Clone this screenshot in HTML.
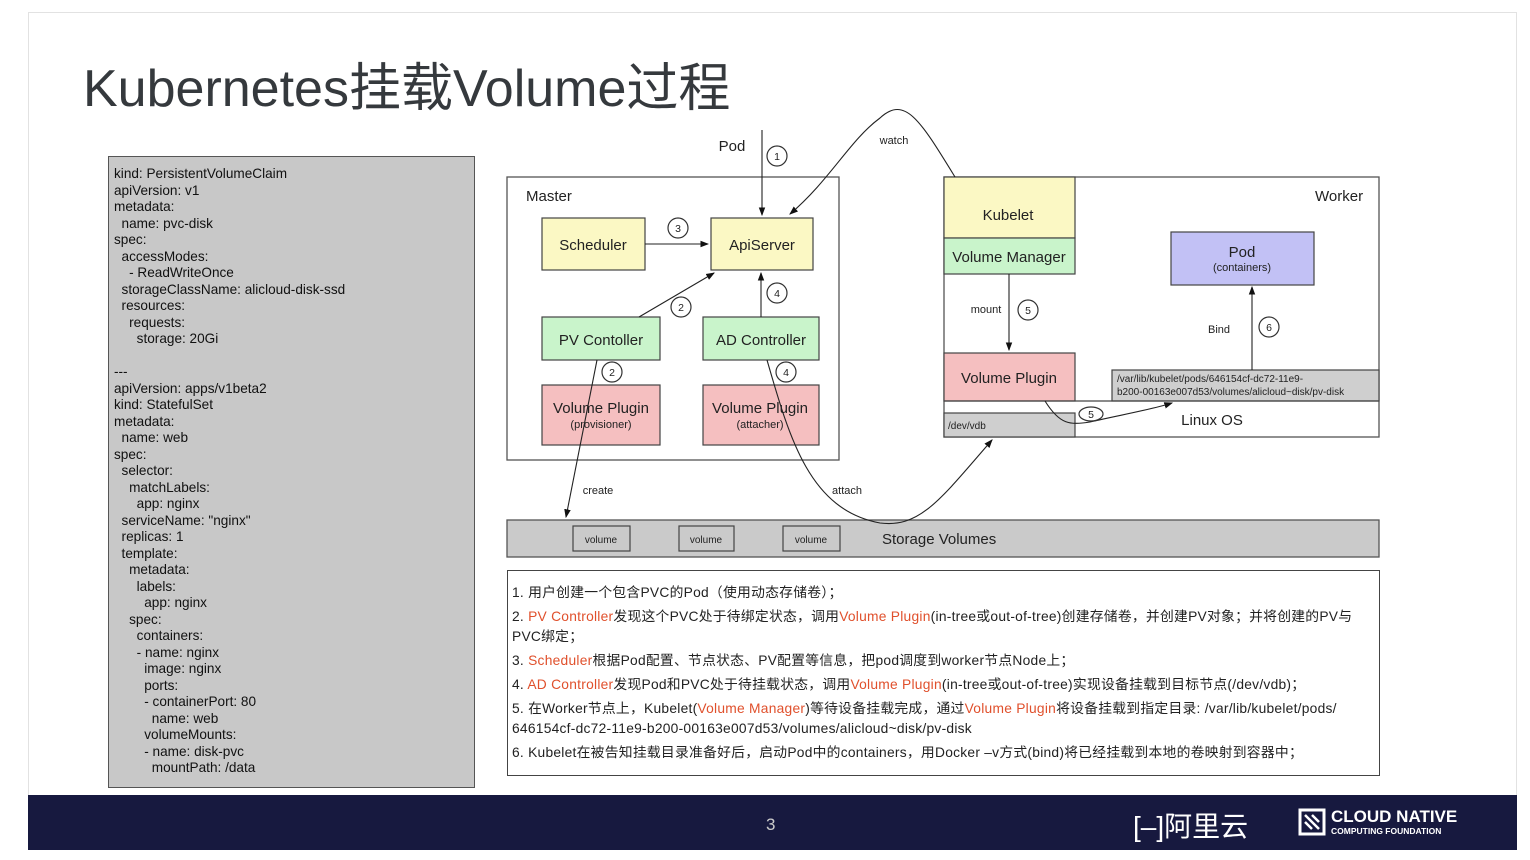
<!DOCTYPE html>
<html><head><meta charset="utf-8"><style>
body{margin:0;width:1530px;height:860px;background:#fff;position:relative;overflow:hidden;font-family:"Liberation Sans","Noto Sans CJK SC",sans-serif}
.slide{position:absolute;left:28px;top:12px;width:1489px;height:838px;border:1px solid #e2e2e2;border-bottom:none;box-sizing:border-box}
.title{position:absolute;left:83px;top:46px;font-size:52px;color:#35393d;white-space:nowrap;letter-spacing:0px}
.code{position:absolute;left:108px;top:156px;width:367px;height:632px;background:#c8c8c8;border:1.5px solid #555;box-sizing:border-box;padding:9px 0 0 5px;font-size:13.6px;line-height:16.5px;color:#111;white-space:pre}
.list{position:absolute;left:507px;top:570px;width:873px;height:206px;border:1.5px solid #444;box-sizing:border-box;padding:10px 0 0 4px;font-size:13.8px;color:#222;line-height:24px;letter-spacing:0.25px}
.list div{white-space:nowrap}
.list .l2{line-height:20px;margin:2px 0 2px}
.r{color:#e0502c}
.footer{position:absolute;left:28px;top:795px;width:1489px;height:55px;background:#17193f;color:#fff}
</style></head><body>
<div class="slide"></div>
<div class="title">Kubernetes挂载Volume过程</div>
<div class="code">kind: PersistentVolumeClaim
apiVersion: v1
metadata:
  name: pvc-disk
spec:
  accessModes:
    - ReadWriteOnce
  storageClassName: alicloud-disk-ssd
  resources:
    requests:
      storage: 20Gi

---
apiVersion: apps/v1beta2
kind: StatefulSet
metadata:
  name: web
spec:
  selector:
    matchLabels:
      app: nginx
  serviceName: "nginx"
  replicas: 1
  template:
    metadata:
      labels:
        app: nginx
    spec:
      containers:
      - name: nginx
        image: nginx
        ports:
        - containerPort: 80
          name: web
        volumeMounts:
        - name: disk-pvc
          mountPath: /data</div>
<svg style="position:absolute;left:0;top:0" width="1530" height="860" font-family="Liberation Sans, sans-serif">
<defs><marker id="a" markerWidth="8" markerHeight="8" refX="7" refY="4" orient="auto"><path d="M0,1 L8,4 L0,7z" fill="#111"/></marker></defs>
<g stroke="#555" stroke-width="1.3" fill="none">
<rect x="507" y="177" width="332" height="283" fill="#fff"/>
<rect x="944" y="177" width="435" height="260" fill="#fff"/>
<rect x="507" y="520" width="872" height="37" fill="#cacaca"/>
</g>
<g stroke="#444" stroke-width="1.2">
<rect x="542" y="218" width="103" height="52" fill="#fbf8c4"/>
<rect x="711" y="218" width="102" height="52" fill="#fbf8c4"/>
<rect x="542" y="317" width="118" height="43" fill="#c9f4cb"/>
<rect x="703" y="317" width="116" height="43" fill="#c9f4cb"/>
<rect x="542" y="385" width="118" height="60" fill="#f5bfc0"/>
<rect x="703" y="385" width="116" height="60" fill="#f5bfc0"/>
<rect x="944" y="177" width="131" height="61" fill="#fbf8c4"/>
<rect x="944" y="238" width="131" height="36" fill="#c9f4cb"/>
<rect x="944" y="353" width="131" height="48" fill="#f5bfc0"/>
<rect x="944" y="413" width="131" height="24" fill="#cfcfcf"/>
<rect x="1112" y="370" width="267" height="31" fill="#cfcfcf"/>
<rect x="1171" y="232" width="143" height="53" fill="#c2c1f5"/>
<rect x="573" y="526" width="57" height="25" fill="#cacaca"/>
<rect x="679" y="526" width="55" height="25" fill="#cacaca"/>
<rect x="783" y="526" width="57" height="25" fill="#cacaca"/>
<line x1="944" y1="401" x2="1379" y2="401"/>
</g>
<g stroke="#222" stroke-width="1.1" fill="none">
<line x1="762" y1="130" x2="762" y2="215" marker-end="url(#a)"/>
<line x1="645" y1="244" x2="708" y2="244" marker-end="url(#a)"/>
<line x1="639" y1="317" x2="714" y2="273" marker-end="url(#a)"/>
<line x1="761" y1="317" x2="761" y2="273" marker-end="url(#a)"/>
<path d="M955,177 C920,120 905,95 880,118 C850,140 830,180 790,214" marker-end="url(#a)"/>
<line x1="597" y1="360" x2="566" y2="517" marker-end="url(#a)"/>
<path d="M767,360 C790,440 810,510 880,523 C920,528 940,500 992,440" marker-end="url(#a)"/>
<line x1="1009" y1="274" x2="1009" y2="350" marker-end="url(#a)"/>
<line x1="1252" y1="370" x2="1252" y2="287" marker-end="url(#a)"/>
<path d="M1045,401 C1060,425 1070,425 1090,422 C1120,415 1150,410 1172,403" marker-end="url(#a)"/>
</g>
<g stroke="#333" stroke-width="1.2" fill="#fff">
<circle cx="777" cy="156" r="10"/><circle cx="678" cy="228" r="10"/><circle cx="681" cy="307" r="10"/><circle cx="777" cy="293" r="10"/>
<circle cx="612" cy="372" r="10"/><circle cx="786" cy="372" r="10"/><circle cx="1028" cy="310" r="10"/><circle cx="1269" cy="327" r="10"/>
<ellipse cx="1091" cy="414" rx="12" ry="7"/>
</g>
<g font-size="10.5" fill="#222" text-anchor="middle">
<text x="777" y="160">1</text><text x="678" y="232">3</text><text x="681" y="311">2</text><text x="777" y="297">4</text>
<text x="612" y="376">2</text><text x="786" y="376">4</text><text x="1028" y="314">5</text><text x="1269" y="331">6</text><text x="1091" y="418">5</text>
</g>
<g fill="#222" text-anchor="middle" font-size="15">
<text x="593" y="250">Scheduler</text><text x="762" y="250">ApiServer</text>
<text x="601" y="345">PV Contoller</text><text x="761" y="345">AD Controller</text>
<text x="601" y="413">Volume Plugin</text><text x="760" y="413">Volume Plugin</text>
<text x="1008" y="220">Kubelet</text><text x="1009" y="262">Volume Manager</text><text x="1009" y="383">Volume Plugin</text>
<text x="1242" y="257">Pod</text><text x="1212" y="425">Linux OS</text>
<text x="732" y="151">Pod</text>
</g>
<g fill="#222" font-size="11" text-anchor="middle">
<text x="601" y="428">(provisioner)</text><text x="760" y="428">(attacher)</text><text x="1242" y="271">(containers)</text>
<text x="601" y="543" font-size="10">volume</text><text x="706" y="543" font-size="10">volume</text><text x="811" y="543" font-size="10">volume</text>
<text x="894" y="144">watch</text><text x="598" y="494">create</text><text x="847" y="494">attach</text>
<text x="986" y="313">mount</text><text x="1219" y="333">Bind</text>
</g>
<g fill="#222" font-size="15">
<text x="526" y="201">Master</text><text x="1315" y="201">Worker</text><text x="882" y="544">Storage Volumes</text>
</g>
<g fill="#222" font-size="10">
<text x="948" y="429">/dev/vdb</text>
<text x="1117" y="382">/var/lib/kubelet/pods/646154cf-dc72-11e9-</text>
<text x="1117" y="395">b200-00163e007d53/volumes/alicloud~disk/pv-disk</text>
</g>
</svg>
<div class="list">
<div>1. 用户创建一个包含PVC的Pod（使用动态存储卷）；</div>
<div class="l2">2. <span class="r">PV Controller</span>发现这个PVC处于待绑定状态，调用<span class="r">Volume Plugin</span>(in-tree或out-of-tree)创建存储卷，并创建PV对象；并将创建的PV与<br>PVC绑定；</div>
<div>3. <span class="r">Scheduler</span>根据Pod配置、节点状态、PV配置等信息，把pod调度到worker节点Node上；</div>
<div>4. <span class="r">AD Controller</span>发现Pod和PVC处于待挂载状态，调用<span class="r">Volume Plugin</span>(in-tree或out-of-tree)实现设备挂载到目标节点(/dev/vdb)；</div>
<div class="l2">5. 在Worker节点上，Kubelet(<span class="r">Volume Manager</span>)等待设备挂载完成，通过<span class="r">Volume Plugin</span>将设备挂载到指定目录: /var/lib/kubelet/pods/<br>646154cf-dc72-11e9-b200-00163e007d53/volumes/alicloud~disk/pv-disk</div>
<div>6. Kubelet在被告知挂载目录准备好后，启动Pod中的containers，用Docker –v方式(bind)将已经挂载到本地的卷映射到容器中；</div>
</div>
<div class="footer">
<div style="position:absolute;left:738px;top:20px;font-size:17px;color:#ccc">3</div>
<div style="position:absolute;left:1105px;top:10px;font-size:28px;white-space:nowrap">[–]阿里云</div>
<svg style="position:absolute;left:1270px;top:13px" width="28" height="28"><rect x="2" y="2" width="24" height="24" fill="none" stroke="#fff" stroke-width="3"/><path d="M7,7 L21,21 M7,14 L14,21 M14,7 L21,14" stroke="#fff" stroke-width="2.5"/></svg>
<div style="position:absolute;left:1303px;top:12px;font-size:17px;font-weight:bold;white-space:nowrap">CLOUD NATIVE</div>
<div style="position:absolute;left:1303px;top:31px;font-size:8.5px;font-weight:bold;white-space:nowrap">COMPUTING FOUNDATION</div>
</div>
</body></html>
